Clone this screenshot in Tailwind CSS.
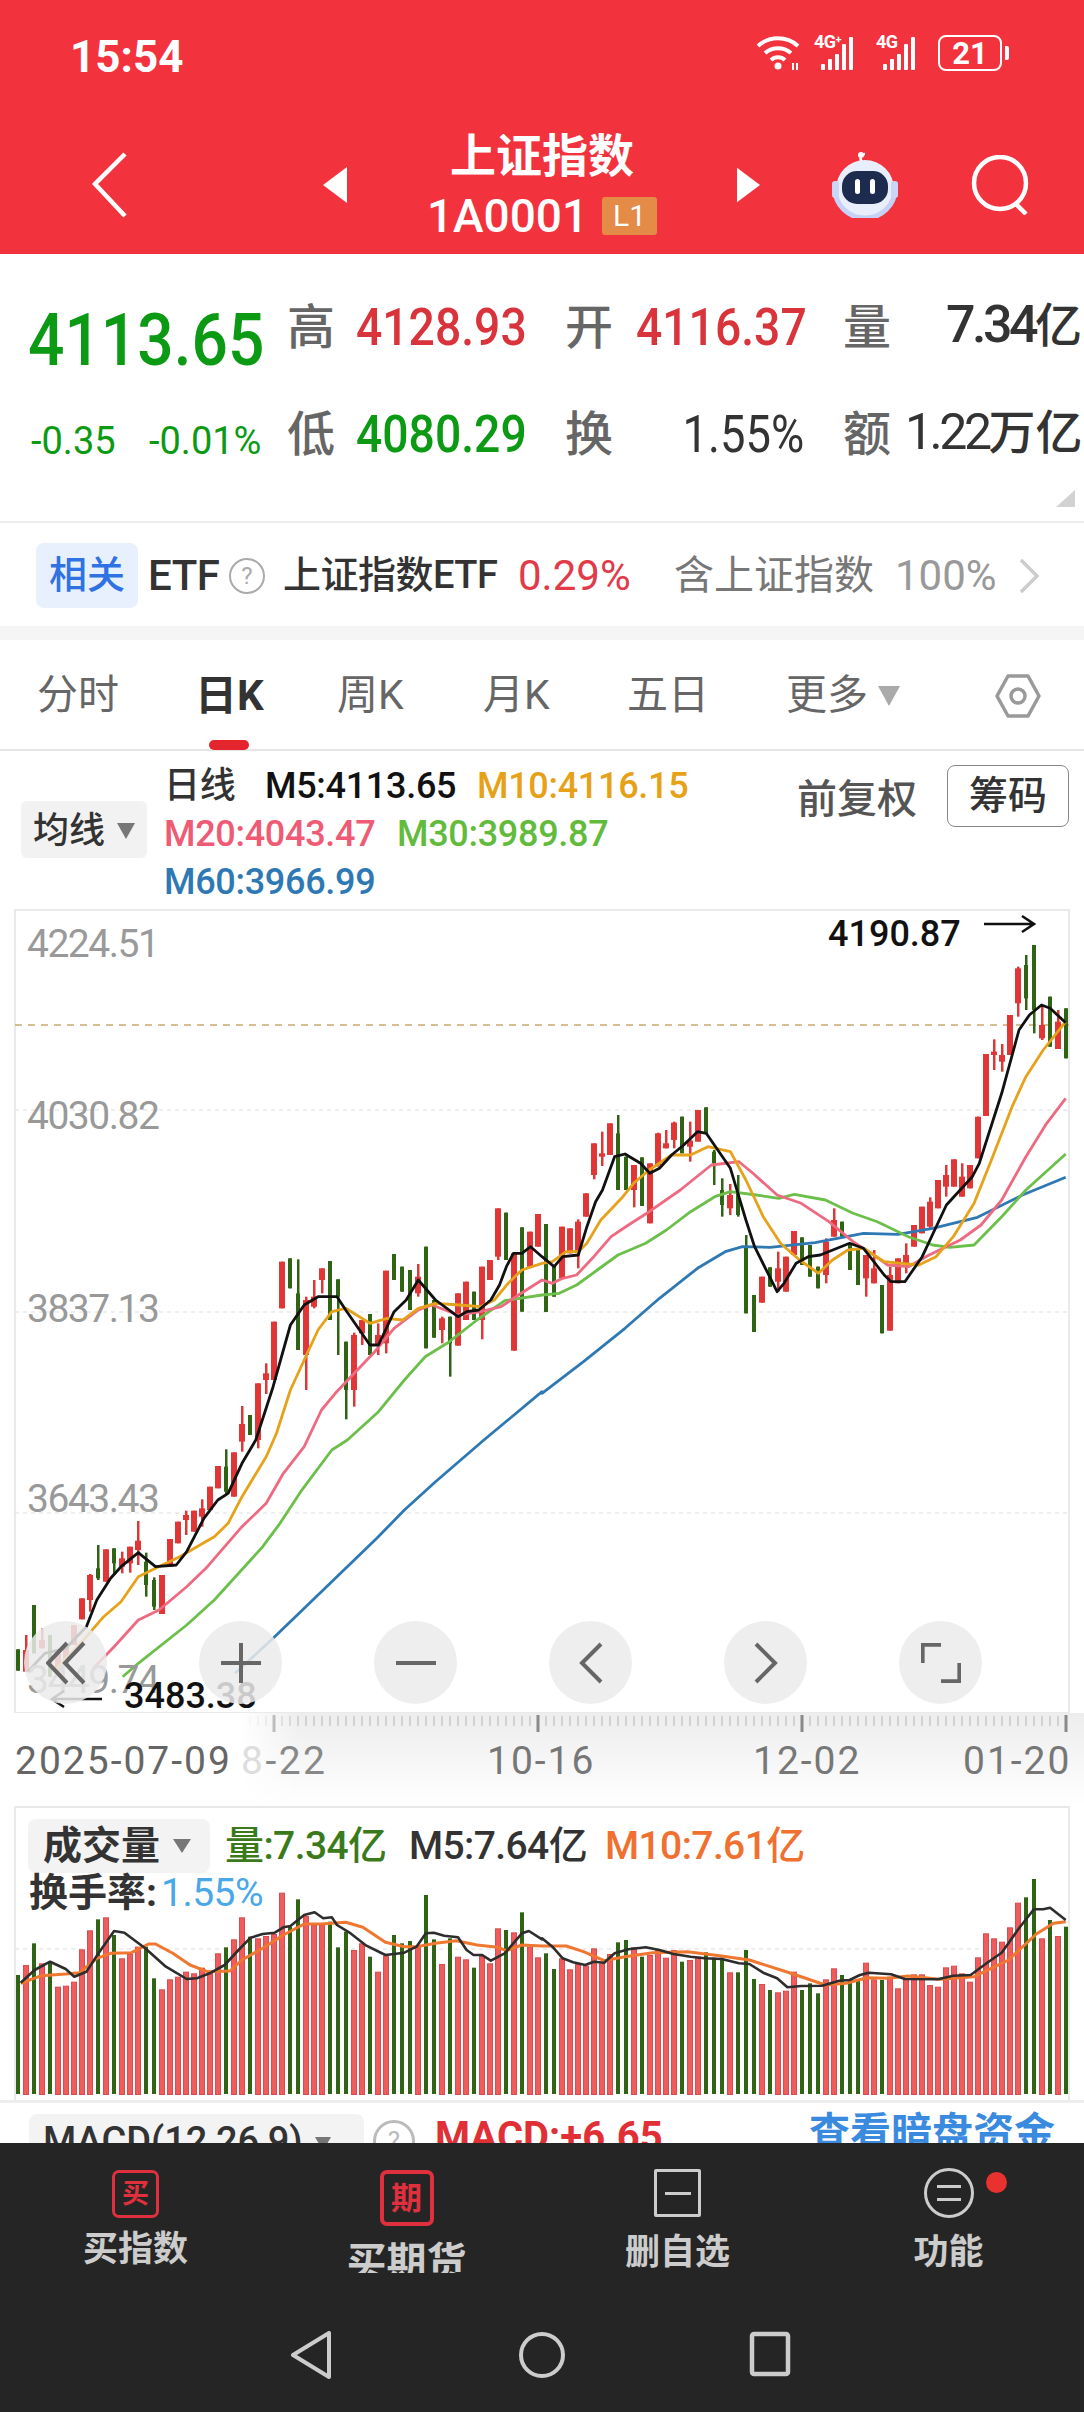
<!DOCTYPE html>
<html lang="zh-CN">
<head>
    <meta charset="UTF-8"/>
    <meta name="viewport" content="width=device-width, initial-scale=1.0"/>
    <title>上证指数 1A0001</title>
    <script src="https://cdn.jsdelivr.net/npm/@tailwindcss/browser@4"></script>
</head>
<body class="bg-white font-['Roboto','Noto_Sans_CJK_SC',sans-serif] text-[#333]">
<div class="w-[1084px] h-[2412px] overflow-hidden flex flex-col">

    <!-- 顶部红色栏 -->
    <header class="h-[254px] shrink-0 bg-[#f2323c] text-white">
        <div class="h-[130px] pt-[27px] pl-[70px] pr-[75px] flex justify-between items-start">
            <span class="text-[44px] leading-[60px] font-bold">15:54</span>
            <div class="flex items-center mt-[8px]">
                <svg class="w-[46px] h-[36px]" viewBox="0 0 46 36" fill="none" stroke="#fff" stroke-width="4">
                    <path d="M2 11a30 30 0 0 1 40 0M9 18a20 20 0 0 1 26 0M15 25a10 10 0 0 1 14 0"/>
                    <circle cx="22" cy="31" r="3.5" fill="#fff" stroke="none"/>
                    <path d="M37 35v-7M41 28v7" stroke-width="2"/>
                </svg>
                <div class="relative w-[48px] h-[34px] ml-[12px]">
                    <span class="absolute left-0 top-[-4px] text-[18px] leading-[20px] font-bold tracking-[-.5px]">4G<sup class="text-[11px]">+</sup></span>
                    <div class="absolute left-[7px] bottom-0 flex items-end gap-[3px]">
                        <i class="block w-[4px] h-[6px] bg-white rounded-[1px]"></i><i class="block w-[4px] h-[11px] bg-white rounded-[1px]"></i><i class="block w-[4px] h-[16px] bg-white rounded-[1px]"></i><i class="block w-[4px] h-[26px] bg-white rounded-[1px]"></i><i class="block w-[4px] h-[33px] bg-white rounded-[1px]"></i>
                    </div>
                </div>
                <div class="relative w-[48px] h-[34px] ml-[14px]">
                    <span class="absolute left-0 top-[-4px] text-[18px] leading-[20px] font-bold tracking-[-.5px]">4G</span>
                    <div class="absolute left-[7px] bottom-0 flex items-end gap-[3px]">
                        <i class="block w-[4px] h-[6px] bg-white rounded-[1px]"></i><i class="block w-[4px] h-[11px] bg-white rounded-[1px]"></i><i class="block w-[4px] h-[16px] bg-white rounded-[1px]"></i><i class="block w-[4px] h-[26px] bg-white rounded-[1px]"></i><i class="block w-[4px] h-[33px] bg-white rounded-[1px]"></i>
                    </div>
                </div>
                <div class="w-[64px] h-[36px] ml-[14px] border-[2px] border-white rounded-[8px] flex items-center justify-center text-[31px] font-bold leading-none">21</div>
                <div class="w-[4px] h-[14px] ml-[3px] bg-white rounded-r-[2px]"></div>
            </div>
        </div>
        <div class="h-[110px] pl-[92px] flex items-center">
            <svg class="w-[36px] h-[66px] shrink-0" viewBox="0 0 36 66" fill="none" stroke="#fff" stroke-width="4.5"><path d="M33 2 3 32l30 32"/></svg>
            <svg class="w-[24px] h-[36px] ml-[195px] shrink-0" viewBox="0 0 24 36" fill="#fff"><path d="M24 0v36L0 18z"/></svg>
            <div class="w-[390px] shrink-0 flex flex-col items-center">
                <div class="text-[46px] leading-[48px] font-bold mt-[-2px]">上证指数</div>
                <div class="flex items-center mt-[16px]">
                    <span class="text-[46px] leading-[40px] font-medium">1A0001</span>
                    <span class="ml-[14px] w-[55px] h-[38px] bg-[#e38b47] rounded-[3px] flex items-center justify-center text-[30px] leading-none">L1</span>
                </div>
            </div>
            <svg class="w-[23px] h-[36px] shrink-0" viewBox="0 0 24 36" fill="#fff"><path d="M0 0v36l24-18z"/></svg>
            <svg class="w-[72px] h-[66px] ml-[69px] shrink-0" viewBox="0 0 72 66">
                <path d="M33 10c-3-4-1-8 3-8" fill="none" stroke="#fff" stroke-width="2.5"/>
                <circle cx="32" cy="3" r="3" fill="#fff"/>
                <circle cx="36" cy="37" r="29" fill="#e8eefc"/>
                <path d="M6 37a30 29 0 0 0 60 0" fill="none" stroke="#c6d2f5" stroke-width="5"/>
                <rect x="3" y="29" width="7" height="17" rx="3" fill="#cbd6f6"/>
                <rect x="62" y="29" width="7" height="17" rx="3" fill="#cbd6f6"/>
                <rect x="13" y="19" width="46" height="33" rx="15" fill="#1d2b4f"/>
                <rect x="26" y="27" width="5" height="15" rx="2.5" fill="#fff"/>
                <rect x="41" y="27" width="5" height="15" rx="2.5" fill="#fff"/>
            </svg>
            <svg class="w-[60px] h-[60px] ml-[70px] shrink-0" viewBox="0 0 60 60" fill="none" stroke="#fff" stroke-width="4.5"><circle cx="29" cy="28" r="26"/><path d="M44 48l11 11"/></svg>
        </div>
    </header>

    <!-- 行情数据 -->
    <section class="relative h-[269px] shrink-0 pt-[20px] border-b-[2px] border-[#ececec]">
        <div class="flex h-[107px] items-center whitespace-nowrap">
            <div class="w-[285px] mr-[2px] pl-[28px] pt-[26px]"><div class="origin-left scale-x-[.89] text-[72px] leading-[72px] font-medium text-[#0c9a14]">4113.65</div></div>
            <div class="w-[69px] text-[48px] leading-[56px] font-medium text-[#666]">高</div>
            <div class="w-[189px] mr-[-20px] text-right origin-left scale-x-[.89] text-[52px] leading-[56px] font-medium text-[#d9333b]">4128.93</div>
            <div class="w-[71px] ml-[40px] text-[48px] leading-[56px] font-medium text-[#666]">开</div>
            <div class="w-[189px] mr-[-20px] text-right origin-left scale-x-[.89] text-[52px] leading-[56px] font-medium text-[#d9333b]">4116.37</div>
            <div class="w-[62px] ml-[38px] text-[48px] leading-[56px] font-medium text-[#666]">量</div>
            <div class="w-[177px] pt-[6px] text-right leading-[56px] font-medium"><span class="text-[52px] tracking-[-3.5px]">7.34</span><span class="text-[47px]">亿</span></div>
        </div>
        <div class="flex h-[107px] items-center whitespace-nowrap">
            <div class="w-[287px] pl-[31px] pt-[12px] flex text-[38px] leading-[40px] text-[#0c9a14]">
                <span class="w-[118px]">-0.35</span><span>-0.01%</span>
            </div>
            <div class="w-[69px] text-[48px] leading-[56px] font-medium text-[#666]">低</div>
            <div class="w-[189px] mr-[-20px] text-right origin-left scale-x-[.89] text-[52px] leading-[56px] font-medium text-[#0c9a14]">4080.29</div>
            <div class="w-[71px] ml-[40px] text-[48px] leading-[56px] font-medium text-[#666]">换</div>
            <div class="w-[189px] mr-[-20px] text-right origin-left scale-x-[.89] text-[51px] leading-[56px]">1.55%</div>
            <div class="w-[62px] ml-[38px] text-[48px] leading-[56px] font-medium text-[#666]">额</div>
            <div class="w-[177px] pt-[6px] text-right leading-[56px]"><span class="text-[50px] tracking-[-3.5px]">1.22</span><span class="text-[47px] font-medium">万亿</span></div>
        </div>
        <svg class="absolute right-[9px] top-[236px] w-[19px] h-[17px]" viewBox="0 0 19 17" fill="#d2d2d2"><path d="M19 0v17H0z"/></svg>
    </section>

    <!-- 相关ETF -->
    <section class="h-[103px] shrink-0 flex items-center pl-[36px] pt-[2px] whitespace-nowrap">
        <div class="w-[102px] h-[65px] bg-[#e8f0fd] rounded-[8px] flex items-center justify-center text-[38px] font-medium text-[#2f72e3]">相关</div>
        <span class="ml-[10px] w-[81px] text-[42px] font-medium text-[#333] tracking-[-.5px]">ETF</span>
        <span class="w-[36px] h-[36px] rounded-full border-[2px] border-[#aaa] flex items-center justify-center text-[24px] text-[#aaa]">?</span>
        <span class="ml-[18px] w-[213px] text-[38px] font-medium tracking-[-.5px] text-[#333]">上证指数ETF</span>
        <span class="ml-[22px] w-[111px] text-[42px] text-[#e23a48]">0.29%</span>
        <span class="ml-[45px] w-[200px] text-[40px] text-[#777]">含上证指数</span>
        <span class="ml-[21px] w-[100px] text-[42px] text-[#999]">100%</span>
        <svg class="ml-[24px] w-[21px] h-[36px]" viewBox="0 0 21 36" fill="none" stroke="#ccc" stroke-width="3.5"><path d="M2 2l16 16L2 34"/></svg>
    </section>
    <div class="h-[14px] shrink-0 bg-[#f5f5f5]"></div>

    <!-- 周期切换 -->
    <nav class="relative h-[111px] shrink-0 flex items-center pl-[37px] pt-[2px] border-b-[2px] border-[#e6e6e6] text-[41px] text-[#666] whitespace-nowrap">
        <span class="w-[158px]">分时</span>
        <span class="w-[142px] font-bold text-[#333] text-[42px]">日K</span>
        <span class="w-[146px]">周K</span>
        <span class="w-[144px]">月K</span>
        <span class="w-[159px]">五日</span>
        <span>更多</span>
        <svg class="ml-[10px] w-[22px] h-[20px]" viewBox="0 0 22 20" fill="#aaa"><path d="M0 0h22L11 20z"/></svg>
        <svg class="ml-[95px] w-[46px] h-[46px]" viewBox="0 0 46 46" fill="none" stroke="#999" stroke-width="3.5"><path d="M13 3h20l11 20-11 20H13L2 23z" stroke-linejoin="round"/><circle cx="23" cy="23" r="7"/></svg>
        <div class="absolute left-[209px] bottom-[-1px] w-[40px] h-[10px] bg-[#e5252d] rounded-[5px]"></div>
    </nav>

    <!-- 均线说明 -->
    <section class="h-[158px] shrink-0 flex pl-[21px] whitespace-nowrap">
        <div class="w-[126px] h-[57px] mt-[50px] bg-[#f2f2f2] rounded-[6px] flex items-center pl-[12px] pt-[3px] text-[36px] font-medium text-[#333]">
            均线
            <svg class="ml-[12px] w-[18px] h-[16px]" viewBox="0 0 18 16" fill="#777"><path d="M0 0h18L9 16z"/></svg>
        </div>
        <div class="ml-[17px] pt-[11px] text-[36px] leading-[48px] tracking-[-.3px] font-medium">
            <div class="flex"><span class="w-[101px]">日线</span><span class="w-[212px] text-[#111]">M5:4113.65</span><span class="text-[#e6a117]">M10:4116.15</span></div>
            <div class="flex"><span class="w-[233px] text-[#ef5a74]">M20:4043.47</span><span class="text-[#63bb3c]">M30:3989.87</span></div>
            <div class="text-[#2e79b4]">M60:3966.99</div>
        </div>
        <div class="ml-auto flex items-start pt-[14px] pr-[15px]">
            <span class="mt-[11px] text-[40px] leading-[48px] font-medium text-[#555]">前复权</span>
            <span class="ml-[30px] w-[122px] h-[62px] border-[1.5px] border-[#888] rounded-[8px] flex items-center justify-center text-[39px] font-medium text-[#333]">筹码</span>
        </div>
    </section>

    <!-- K线图 -->
    <section class="relative h-[804px] shrink-0">
        <svg id="kline" class="absolute inset-0 w-[1084px] h-[804px]" viewBox="0 909 1084 804"></svg>
        <span class="absolute left-[27px] top-[15px] text-[39px] leading-[40px] tracking-[-1.5px] text-[#999]">4224.51</span>
        <span class="absolute left-[27px] top-[187px] text-[39px] leading-[40px] tracking-[-1.5px] text-[#999]">4030.82</span>
        <span class="absolute left-[27px] top-[380px] text-[39px] leading-[40px] tracking-[-1.5px] text-[#999]">3837.13</span>
        <span class="absolute left-[27px] top-[570px] text-[39px] leading-[40px] tracking-[-1.5px] text-[#999]">3643.43</span>
        <span class="absolute left-[27px] top-[751px] text-[39px] leading-[40px] tracking-[-1.5px] text-[#999]">3449.74</span>
        <span class="absolute left-[828px] top-[5px] text-[36px] leading-[40px] font-medium text-[#111]">4190.87</span>
        <svg class="absolute left-[984px] top-[5px] w-[52px] h-[20px]" viewBox="0 0 52 20" fill="none" stroke="#111" stroke-width="2.5"><path d="M0 10h50M38 2l12 8-12 8"/></svg>
        <span class="absolute left-[124px] top-[767px] text-[36px] leading-[40px] font-medium text-[#111]">3483.38</span>
        <svg class="absolute left-[50px] top-[780px] w-[52px] h-[20px]" viewBox="0 0 52 20" fill="none" stroke="#111" stroke-width="2.5"><path d="M52 10H2M14 2 2 10l12 8"/></svg>

        <!-- 悬浮按钮 -->
        <div class="absolute left-[24px] top-[712px] w-[83px] h-[83px] rounded-full bg-[#ebebeb]/85 flex items-center justify-center">
            <svg class="w-[40px] h-[44px]" viewBox="0 0 40 44" fill="none" stroke="#666" stroke-width="4"><path d="M21 2 2 22l19 20M38 2 19 22l19 20"/></svg>
        </div>
        <div class="absolute left-[199px] top-[712px] w-[83px] h-[83px] rounded-full bg-[#ebebeb]/85 flex items-center justify-center">
            <svg class="w-[40px] h-[40px]" viewBox="0 0 40 40" fill="none" stroke="#666" stroke-width="4"><path d="M0 20h40M20 0v40"/></svg>
        </div>
        <div class="absolute left-[374px] top-[712px] w-[83px] h-[83px] rounded-full bg-[#ebebeb]/85 flex items-center justify-center">
            <svg class="w-[40px] h-[6px]" viewBox="0 0 40 6" fill="none" stroke="#666" stroke-width="4"><path d="M0 3h40"/></svg>
        </div>
        <div class="absolute left-[549px] top-[712px] w-[83px] h-[83px] rounded-full bg-[#ebebeb]/85 flex items-center justify-center">
            <svg class="w-[24px] h-[42px]" viewBox="0 0 24 42" fill="none" stroke="#666" stroke-width="4"><path d="M22 2 3 21l19 19"/></svg>
        </div>
        <div class="absolute left-[724px] top-[712px] w-[83px] h-[83px] rounded-full bg-[#ebebeb]/85 flex items-center justify-center">
            <svg class="w-[24px] h-[42px]" viewBox="0 0 24 42" fill="none" stroke="#666" stroke-width="4"><path d="M2 2l19 19L2 40"/></svg>
        </div>
        <div class="absolute left-[899px] top-[712px] w-[83px] h-[83px] rounded-full bg-[#ebebeb]/85 flex items-center justify-center">
            <svg class="w-[40px] h-[42px]" viewBox="0 0 44 44" fill="none" stroke="#666" stroke-width="4"><path d="M2 22V2h20M42 22v20H22"/></svg>
        </div>
    </section>

    <!-- 时间轴 -->
    <section class="relative h-[93px] shrink-0 bg-linear-to-b from-[#ededed] to-white">
        <svg id="ruler" class="absolute inset-0 w-[1084px] h-[24px]" viewBox="0 0 1084 24"></svg>
        <div class="absolute left-0 top-0 w-[300px] h-[93px] bg-linear-to-r from-white from-[80%] to-transparent"></div>
        <div class="absolute left-[15px] top-[26px] text-[39px] leading-[44px] tracking-[2px] text-[#666] whitespace-nowrap">2025-07-09</div>
        <div class="absolute left-[241px] top-[26px] text-[39px] leading-[44px] tracking-[2.5px] text-[#888] whitespace-nowrap"><span class="text-[#ddd]">8</span>-22</div>
        <div class="absolute left-[487px] top-[26px] text-[39px] leading-[44px] tracking-[2px] text-[#777] whitespace-nowrap">10-16</div>
        <div class="absolute left-[753px] top-[26px] text-[39px] leading-[44px] tracking-[2px] text-[#777] whitespace-nowrap">12-02</div>
        <div class="absolute left-[963px] top-[26px] text-[39px] leading-[44px] tracking-[2px] text-[#777] whitespace-nowrap">01-20</div>
    </section>

    <!-- 成交量 -->
    <section class="relative h-[294px] shrink-0">
        <svg id="volume" class="absolute inset-0 w-[1084px] h-[294px]" viewBox="0 1806 1084 294"></svg>
        <div class="relative flex items-center pt-[13px] pl-[28px] whitespace-nowrap">
            <div class="w-[182px] h-[54px] bg-[#f3f3f3] rounded-[8px] flex items-center pl-[15px] text-[39px] font-bold text-[#333]">
                成交量
                <svg class="ml-[13px] w-[18px] h-[14px]" viewBox="0 0 18 14" fill="#777"><path d="M0 0h18L9 14z"/></svg>
            </div>
            <span class="ml-[15px] w-[184px] text-[39px] leading-[50px] font-medium text-[#3a7a1a] tracking-[-.6px]">量:7.34亿</span>
            <span class="w-[196px] text-[39px] leading-[50px] font-medium text-[#333] tracking-[-.6px]">M5:7.64亿</span>
            <span class="text-[39px] leading-[50px] font-medium text-[#f0702f] tracking-[-.6px]">M10:7.61亿</span>
        </div>
        <div class="relative pl-[29px] text-[39px] leading-[40px] whitespace-nowrap"><span class="font-bold text-[#333]">换手率:</span><span class="ml-[4px] text-[#4aa8e8] tracking-[-.5px]">1.55%</span></div>
    </section>

    <!-- MACD -->
    <section class="h-[43px] shrink-0 overflow-hidden border-t-[3px] border-[#eee] flex items-start pl-[29px] pt-[11px] whitespace-nowrap">
        <div class="w-[335px] h-[60px] bg-[#f3f3f3] rounded-[8px] flex items-start pl-[14px] pt-[3px] text-[38px] leading-[48px] font-medium text-[#333]">
            MACD(12,26,9)
            <svg class="ml-[12px] mt-[20px] w-[16px] h-[14px]" viewBox="0 0 16 14" fill="#777"><path d="M0 0h16L8 14z"/></svg>
        </div>
        <div class="ml-[9px] mt-[6px] w-[42px] h-[42px] rounded-full border-[3px] border-[#bbb] flex items-center justify-center text-[26px] text-[#bbb]">?</div>
        <span class="ml-[20px] mt-[-1px] text-[40px] leading-[48px] font-bold text-[#e03036]">MACD:+6.65</span>
        <span class="ml-auto mr-[29px] mt-[-5px] text-[41px] leading-[48px] font-bold text-[#3a8ae0]">查看暗盘资金</span>
    </section>

    <!-- 底部操作栏 -->
    <footer class="h-[269px] shrink-0 bg-[#252525] text-[#ccc]">
        <div class="grid grid-cols-4 h-[130px] overflow-hidden pt-[25px] text-center">
            <div class="flex flex-col items-center">
                <div class="mt-[2px] w-[47px] h-[48px] border-[3px] border-[#e0303e] rounded-[7px] flex items-center justify-center text-[27px] font-bold text-[#e0303e] leading-none">买</div>
                <div class="mt-[10px] text-[35px] leading-[44px] font-bold">买指数</div>
            </div>
            <div class="flex flex-col items-center">
                <div class="mt-[2px] w-[54px] h-[56px] border-[4px] border-[#e0303e] rounded-[7px] flex items-center justify-center text-[31px] font-bold text-[#e0303e] leading-none">期</div>
                <div class="mt-[13px] text-[40px] leading-[48px] font-bold">买期货</div>
            </div>
            <div class="flex flex-col items-center">
                <div class="mt-[1px] w-[47px] h-[48px] border-[3px] border-[#ccc] rounded-[2px] flex items-center justify-center"><i class="block w-[26px] h-[3px] bg-[#ccc]"></i></div>
                <div class="mt-[14px] text-[35px] leading-[44px] font-bold">删自选</div>
            </div>
            <div class="relative flex flex-col items-center">
                <div class="w-[50px] h-[50px] border-[3px] border-[#ccc] rounded-full flex flex-col items-center justify-center gap-[10px]"><i class="block w-[24px] h-[3px] bg-[#ccc]"></i><i class="block w-[24px] h-[3px] bg-[#ccc]"></i></div>
                <div class="mt-[13px] text-[35px] leading-[44px] font-bold">功能</div>
                <i class="absolute left-[173px] top-[4px] block w-[21px] h-[21px] rounded-full bg-[#e8322f]"></i>
            </div>
        </div>
        <div class="flex items-start pt-[58px] pl-[290px]">
            <svg class="w-[42px] h-[48px]" viewBox="0 0 42 48" fill="none" stroke="#ccc" stroke-width="4" stroke-linejoin="round"><path d="M39 2v44L3 24z"/></svg>
            <svg class="ml-[186px] w-[48px] h-[48px]" viewBox="0 0 48 48" fill="none" stroke="#ccc" stroke-width="4"><circle cx="24" cy="24" r="21"/></svg>
            <svg class="ml-[183px] w-[42px] h-[46px]" viewBox="0 0 42 46" fill="none" stroke="#ccc" stroke-width="4.5"><rect x="3" y="3" width="36" height="40" rx="2"/></svg>
        </div>
    </footer>
</div>

<script>
    const NS = 'http://www.w3.org/2000/svg';
    const RED = '#e03636', GREEN = '#2f6414';

    function add(svg, tag, attrs) {
      const el = document.createElementNS(NS, tag);
      Object.keys(attrs).forEach(k => el.setAttribute(k, attrs[k]));
      svg.appendChild(el);
      return el;
    }

    // [color, wick top, wick bottom, body top, body bottom], read off the reference
    const candlesLeft = [
      ['g',1048,1112,1048,1112],['r',1005,1115,1050,1115],['g',915,1060,915,1060],['r',985,1045,1020,1045],['g',1005,1130,1005,1130],
      ['r',1060,1110,1060,1110],['r',1040,1100,1040,1100],['r',975,1035,975,1035],['r',895,958,895,958],['r',822,935,825,900],
      ['g',735,840,805,835],['r',748,845,748,845],['g',745,825,745,790],['r',755,820,775,800],['r',740,818,740,790],
      ['r',663,795,722,750],['g',758,890,785,855],['g',832,930,840,920],['r',825,942,825,942],['r',717,800,717,800],
      ['r',665,730,665,730],['r',632,705,645,660],['r',632,695,632,695],['r',598,680,625,650],['r',560,630,560,630],
      ['r',498,565,498,565],['g',448,585,500,575],['r',457,590,457,590],['r',318,455,372,425],['g',345,405,345,405],
      ['r',250,445,250,420],['r',190,282,220,240],['r',65,240,65,240],['r',-115,25,-115,25],['g',-125,-35,-125,-35],
      ['g',-122,150,-20,150],['r',-10,270,0,165],['r',-60,25,-10,20],['r',-95,-20,-95,-60],['g',-117,60,-117,60],
      ['g',-62,165,-62,-10],['g',125,358,125,270],['r',98,320,105,270],['r',60,135,60,100],['g',42,165,42,165],
      ['r',70,165,105,135],['r',-88,160,-88,130],['g',-138,-60,-138,-60],['g',-100,-25,-100,-25],['g',-90,30,-90,30],
      ['r',-108,-10,-70,-20],['g',-160,145,-160,145],['g',0,113,0,113],['r',50,130,55,90],['g',50,230,50,130],
      ['r',-20,137,-20,137],['r',-55,60,-55,60],['g',-25,60,-25,60],['r',-100,118,-100,60],['r',-120,-60,-120,-60],
      ['r',-275,-120,-275,-130],['g',-262,-120,-262,-120],['r',-140,152,-140,152],['g',-218,35,-218,35],['r',-205,-100,-205,-100],
      ['r',-258,-160,-258,-160]
    ];
    const candlesRight = [
      ['g',972,1236,972,1236],['g',1100,1190,1100,1190],['r',980,1135,980,1135],['r',985,1060,985,1060],['r',958,1105,965,1055],
      ['r',880,950,880,950],['r',730,838,730,825],['r',695,798,760,770],['r',670,765,670,765],['g',645,870,700,870],
      ['g',770,870,770,870],['r',795,922,795,870],['g',772,918,772,918],['r',790,970,790,970],['r',698,800,700,795],
      ['r',690,745,730,745],['r',665,745,668,720],['g',650,760,650,760],['r',665,785,722,740],['r',630,725,630,725],
      ['g',622,700,622,700],['g',750,855,755,790],['g',835,950,870,915],['r',852,945,885,925],['g',825,950,880,945],
      ['g',1005,1240,1040,1240],['g',1185,1296,1185,1296],['r',1130,1208,1130,1208],['g',1102,1160,1102,1160],['r',1055,1175,1105,1145],
      ['r',1070,1175,1070,1175],['r',993,1065,993,1065],['g',1012,1095,1012,1095],['g',1035,1130,1035,1130],['g',1100,1165,1100,1165],
      ['r',1015,1150,1025,1125],['r',925,1010,960,1010],['g',965,1010,965,1010],['g',1030,1110,1030,1110],['g',1050,1155,1050,1155],
      ['r',1065,1190,1065,1135],['r',1050,1150,1105,1150],['g',1155,1300,1155,1300],['r',1100,1292,1125,1292],['r',1075,1150,1075,1150],
      ['r',1030,1120,1065,1100],['r',975,1040,975,1040],['r',920,1000,920,1000],['r',892,985,905,980],['r',840,925,840,925],
      ['r',795,890,825,860],['r',778,860,778,860],['r',790,890,830,890],['r',795,865,795,865],['r',650,775,650,775],
      ['r',462,648,462,648],['r',418,510,455,465],['r',432,515,465,485],['r',345,465,345,465],['r',200,350,205,310],
      ['g',165,330,195,295],['g',135,400,135,330],['r',315,420,375,415],['g',290,440,290,440],['r',330,447,365,447],
      ['g',325,475,325,475]
    ];

    const leftX = x => x / 2.893, rightX = x => 542 + x / 2.893;
    const pts = (list, fx, fy) => list.map(p => `${fx(p[0]).toFixed(1)},${fy(p[1]).toFixed(1)}`).join(' ');

    // moving averages: first part uses the left crop, second part the right crop
    const klineY1 = y => 1300 + y / 3, klineY2 = y => 900 + y / 3;
    const maLines = [
      ['#2e79b4',
        [[680,1120],[790,1015],[920,885],[1090,715],[1170,630],[1260,545],[1400,420],[1568,275]],
        [[0,1480],[120,1385],[240,1285],[340,1195],[450,1105],[530,1055],[580,1040],[660,1042],[790,1028],[930,1000],[1030,1003],[1130,985],[1260,952],[1390,885],[1515,832]]],
      ['#6cbf4a',
        [[355,1130],[400,1090],[540,975],[620,900],[760,740],[810,670],[870,575],[960,450],[1005,420],[1095,335],[1170,240],[1230,170],[1300,125],[1380,60],[1460,2],[1568,-15]],
        [[0,1185],[50,1180],[100,1155],[160,1110],[220,1065],[300,1030],[360,990],[430,935],[500,890],[545,875],[620,885],[685,895],[730,883],[820,900],[900,940],[970,965],[1060,1010],[1130,1035],[1180,1042],[1250,1035],[1330,950],[1400,870],[1515,762]]],
      ['#ee6a80',
        [[270,1105],[330,1040],[400,960],[460,930],[540,860],[600,800],[700,680],[770,610],[820,520],[880,440],[930,330],[970,280],[1020,225],[1080,160],[1140,85],[1210,30],[1250,15],[1325,45],[1390,35],[1450,20],[1500,-15],[1568,-60]],
        [[0,1140],[30,1150],[60,1135],[100,1125],[150,1070],[200,1010],[250,975],[310,935],[400,870],[490,795],[570,785],[610,820],[680,885],[750,910],[830,965],[900,1025],[960,1065],[1000,1095],[1060,1100],[1120,1065],[1210,1020],[1270,975],[1330,900],[1400,770],[1460,670],[1515,595]]],
      ['#e5a21a',
        [[160,1110],[250,1010],[300,950],[350,905],[400,830],[450,805],[520,770],[620,710],[660,670],[700,590],[770,470],[800,400],[840,270],[880,180],[920,90],[960,35],[1000,25],[1070,70],[1120,55],[1165,60],[1210,25],[1260,10],[1330,15],[1390,20],[1430,0],[1470,-50],[1510,-90],[1568,-110]],
        [[0,1090],[30,1085],[70,1055],[105,1055],[130,1030],[170,960],[230,895],[265,850],[310,810],[375,765],[430,765],[480,740],[545,755],[590,840],[640,950],[690,1030],[745,1080],[800,1120],[840,1080],[885,1050],[930,1045],[990,1085],[1040,1090],[1090,1095],[1140,1070],[1190,1010],[1250,910],[1300,780],[1360,620],[1400,530],[1450,450],[1515,365]]],
      ['#111',
        [[80,1115],[130,1060],[190,1045],[250,980],[280,900],[320,835],[350,800],[400,758],[450,800],[510,795],[540,755],[590,655],[630,600],[660,580],[700,490],[740,420],[790,260],[840,75],[880,15],[920,-10],[975,-10],[1000,30],[1070,135],[1095,135],[1140,35],[1175,0],[1210,-60],[1260,0],[1325,50],[1350,35],[1385,30],[1420,0],[1445,-45],[1465,-100],[1485,-140],[1510,-140],[1535,-160],[1568,-130]],
        [[0,1070],[35,1100],[60,1070],[105,1065],[130,980],[155,905],[175,870],[210,770],[240,762],[285,790],[312,820],[340,805],[375,765],[410,735],[450,695],[475,700],[545,805],[590,960],[615,1040],[680,1175],[700,1150],[735,1090],[770,1070],[805,1065],[890,1030],[930,1045],[990,1125],[1010,1145],[1050,1145],[1100,1070],[1170,915],[1245,830],[1265,790],[1330,580],[1380,390],[1410,345],[1445,315],[1470,325],[1515,368]]]
    ];

    function drawKline() {
      const svg = document.getElementById('kline');
      add(svg, 'rect', {x: 15, y: 910, width: 1054, height: 803, fill: 'none', stroke: '#eaeaea', 'stroke-width': 2});
      [1110, 1312, 1513].forEach(y => add(svg, 'line', {x1: 15, x2: 1069, y1: y, y2: y, stroke: '#ddd', 'stroke-width': 1, 'stroke-dasharray': '4 4'}));
      add(svg, 'line', {x1: 15, x2: 1069, y1: 1025, y2: 1025, stroke: '#c9a972', 'stroke-width': 1.5, 'stroke-dasharray': '7 6'});

      const draw = (c, i, fy) => {
        const x = 18 + 8 * i;
        const col = c[0] === 'r' ? RED : GREEN;
        add(svg, 'rect', {x: x - 1, y: fy(c[1]), width: 2.5, height: (c[2] - c[1]) / 3, fill: col});
        const w = c[0] === 'r' ? 6 : 4;
        add(svg, 'rect', {x: x - w / 2, y: fy(c[3]), width: w, height: (c[4] - c[3]) / 3, fill: col});
      };
      candlesLeft.forEach((c, i) => draw(c, i, klineY1));
      candlesRight.forEach((c, i) => draw(c, i + 66, klineY2));

      maLines.forEach(([color, left, right]) => {
        const p = pts(left, leftX, klineY1) + ' ' + pts(right, rightX, klineY2);
        add(svg, 'polyline', {points: p, fill: 'none', stroke: color, 'stroke-width': 2.8, 'stroke-linejoin': 'round'});
      });
    }

    function drawRuler() {
      const svg = document.getElementById('ruler');
      for (let i = 29; i < 132; i++) {
        const x = 18 + 8 * i;
        if ((i - 32) % 33 === 0) add(svg, 'rect', {x: x - 1.5, y: 2, width: 3, height: 17, fill: '#8a8a8a'});
        else add(svg, 'rect', {x: x - .5, y: 3, width: 1, height: 10, fill: '#b5b5b5'});
      }
    }

    // volume bars: 'r' or 'g' + top in crop pixels
    const volumes = ('g555 r525 g460 r520 g515 r590 r587 r575 r478 r421 g388 r382 g435 r505 r492 r470 g470 g565 r598 r568 r560 r545 r550 r533 r545 r490 g472 r448 r382 g440 r445 r438 r432 r308 g410 g328 r378 r405 r405 g395 g472 g425 r480 r460 g500 r545 r497 g435 g460 g453 r470 g315 g448 r522 g445 r500 r508 g533 r498 r520 r415 g420 r427 g367 r470 r502 ' +
      'g490 g537 r505 r538 r522 r527 r475 r520 r492 g457 g450 r472 g500 r495 r480 r503 r480 g515 r510 r500 g487 g503 g503 r547 g547 g480 g567 r582 g600 r607 r602 r545 g600 g580 g610 r568 r535 g555 g570 g570 r518 r568 g570 r560 r595 r567 r553 r553 r585 r590 r532 r527 r550 r575 r502 r430 r445 r455 r412 r338 g322 g267 r445 g390 r438 g410').split(' ');

    const volLines = [
      ['#f0772f', 3,
        [[60,580],[120,557],[190,552],[230,548],[280,505],[320,490],[380,488],[430,462],[450,462],[500,490],[550,525],[600,545],[665,543],[700,510],[760,475],[820,435],[880,402],[930,402],[1000,397],[1050,412],[1115,457],[1170,470],[1205,470],[1260,460],[1320,452],[1380,465],[1440,472],[1465,482],[1510,465],[1568,468]],
        [[0,468],[70,468],[120,485],[180,512],[240,500],[320,488],[420,485],[520,498],[600,510],[720,550],[820,585],[880,580],[940,563],[1000,565],[1060,558],[1150,568],[1250,560],[1350,510],[1430,432],[1480,400],[1515,395]]],
      ['#2d2d2d', 2.6,
        [[60,578],[100,540],[145,515],[190,537],[215,560],[250,545],[285,490],[330,423],[360,428],[420,475],[480,530],[540,567],[570,565],[610,548],[650,525],[690,480],[725,443],[760,432],[795,428],[820,412],[840,408],[880,375],[910,367],[935,385],[960,382],[975,405],[1010,427],[1060,467],[1115,495],[1170,488],[1205,470],[1232,430],[1255,428],[1285,437],[1325,442],[1350,480],[1370,495],[1395,495],[1420,512],[1460,490],[1510,430],[1530,423],[1568,448]],
        [[0,445],[30,470],[60,505],[90,517],[125,525],[150,515],[180,518],[210,490],[250,478],[300,472],[340,480],[380,492],[430,500],[470,505],[520,507],[570,520],[600,522],[640,548],[680,565],[710,592],[750,588],[810,587],[860,572],[890,570],[920,555],[945,548],[1010,553],[1050,567],[1145,568],[1190,557],[1240,555],[1290,517],[1330,488],[1380,415],[1423,358],[1450,358],[1470,353],[1515,390]]]
    ];

    function drawVolume() {
      const svg = document.getElementById('volume');
      const fy = y => 1790 + y / 3;
      add(svg, 'line', {x1: 15, x2: 1069, y1: 1807, y2: 1807, stroke: '#e8e8e8', 'stroke-width': 2});
      add(svg, 'line', {x1: 15, x2: 15, y1: 1806, y2: 2100, stroke: '#eaeaea', 'stroke-width': 2});
      add(svg, 'line', {x1: 1069, x2: 1069, y1: 1806, y2: 2100, stroke: '#eaeaea', 'stroke-width': 2});
      add(svg, 'line', {x1: 15, x2: 1069, y1: 1949, y2: 1949, stroke: '#ddd', 'stroke-width': 1, 'stroke-dasharray': '4 4'});
      volumes.forEach((v, i) => {
        const x = 18 + 8 * i, top = fy(+v.slice(1));
        if (v[0] === 'g') add(svg, 'rect', {x: x - 2, y: top, width: 4, height: 2094 - top, fill: GREEN});
        else add(svg, 'rect', {x: x - 2.5, y: top + .5, width: 5, height: 2094 - top, fill: '#f05c5c', stroke: '#d94c50', 'stroke-width': 1});
      });
      volLines.forEach(([color, w, left, right]) => {
        const p = pts(left, leftX, fy) + ' ' + pts(right, rightX, fy);
        add(svg, 'polyline', {points: p, fill: 'none', stroke: color, 'stroke-width': w, 'stroke-linejoin': 'round'});
      });
    }

    drawKline();
    drawRuler();
    drawVolume();
</script>
</body>
</html>
